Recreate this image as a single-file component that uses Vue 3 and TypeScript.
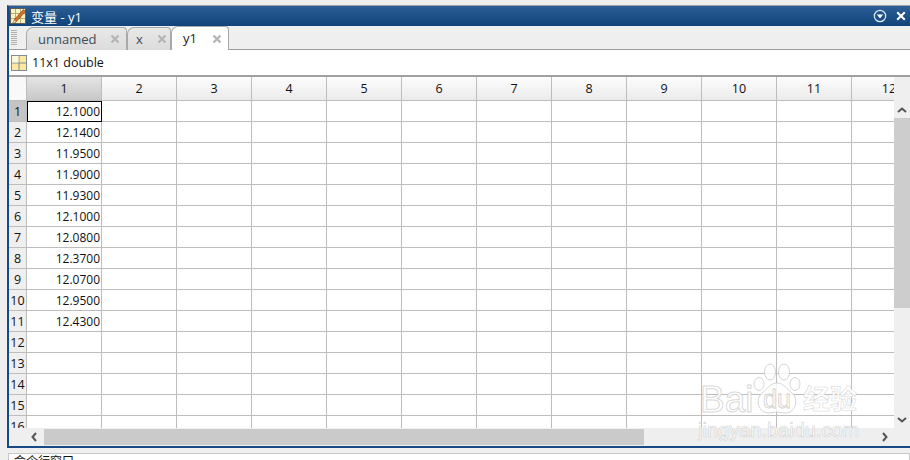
<script setup lang="ts">
const columns = Array.from({ length: 12 }, (_, i) => i + 1)
const values = ['12.1000', '12.1400', '11.9500', '11.9000', '11.9300', '12.1000', '12.0800', '12.3700', '12.0700', '12.9500', '12.4300']
const rows = Array.from({ length: 16 }, (_, i) => ({ n: i + 1, value: values[i] ?? '' }))
const tabs = [
  { name: 'unnamed', width: 101 },
  { name: 'x', width: 44 },
  { name: 'y1', width: 58, active: true },
]
</script>

<template>
  <div class="page">
    <div class="window">
      <div class="titlebar">
        <svg class="app-icon" width="16" height="16" viewBox="0 0 16 16">
          <rect x="0.5" y="0.5" width="15" height="15" fill="#fbf3bd" stroke="#5c5c5c" />
          <path d="M1 5.5h14M1 10.5h14M5.5 1v14M10.5 1v14" stroke="#b8ac78" fill="none" />
          <path d="M4 12 L13.5 1.5 L15.5 3.5 L6 14 L3 15 Z" fill="#d9702a" stroke="#7a3410" stroke-width="0.6" />
          <path d="M3 15l1-3 2 2z" fill="#f5e2c0" />
        </svg>
        <span class="title">变量 - y1</span>
        <span class="spacer"></span>
        <svg width="14" height="14" viewBox="0 0 14 14">
          <circle cx="7" cy="7" r="5.7" fill="none" stroke="#dfe8f2" stroke-width="1.2" />
          <path d="M3.8 5.6h6.4L7 9.4z" fill="#fff" />
        </svg>
        <svg class="close" width="10" height="10" viewBox="0 0 10 10">
          <path d="M1.2 1.2l7.6 7.6M8.8 1.2L1.2 8.8" stroke="#fff" stroke-width="2" />
        </svg>
      </div>

      <div class="tabstrip">
        <div class="grip"></div>
        <div v-for="tab in tabs" :key="tab.name" class="tab" :class="{ active: tab.active }" :style="{ width: tab.width + 'px' }">
          <span class="tab-name">{{ tab.name }}</span>
          <svg width="10" height="10" viewBox="0 0 10 10">
            <path d="M1.5 1.5l7 7M8.5 1.5l-7 7" stroke="#b4b4b4" stroke-width="2.2" />
          </svg>
        </div>
      </div>

      <div class="info">
        <svg width="16" height="16" viewBox="0 0 16 16">
          <rect x="0.5" y="0.5" width="15" height="15" fill="#fbe9a0" stroke="#7f8c99" />
          <path d="M0.5 8h15M8 0.5v15" stroke="#7f8c99" fill="none" />
          <rect x="1" y="1" width="6.5" height="6.5" fill="#fdf8dc" />
        </svg>
        <span>11x1 double</span>
      </div>

      <div class="sheet">
        <div class="sheet-main">
          <div class="grid-wrap">
            <table class="grid">
              <thead>
                <tr>
                  <th class="corner"></th>
                  <th v-for="c in columns" :key="c" class="col" :class="{ selected: c === 1 }">{{ c }}</th>
                </tr>
              </thead>
              <tbody>
                <tr v-for="r in rows" :key="r.n">
                  <th class="rowhead" :class="{ selected: r.n === 1 }">{{ r.n }}</th>
                  <td v-for="c in columns" :key="c" :class="{ current: c === 1 && r.n === 1 }">{{ c === 1 ? r.value : '' }}</td>
                </tr>
              </tbody>
            </table>
          </div>
          <div class="vscroll">
            <svg class="arrow" width="10" height="6" viewBox="0 0 10 6"><path d="M1 5l4-3.5L9 5" fill="none" stroke="#555" stroke-width="2" /></svg>
            <div class="vtrack"><div class="vthumb"></div></div>
            <svg class="arrow" width="10" height="6" viewBox="0 0 10 6"><path d="M1 1l4 3.5L9 1" fill="none" stroke="#555" stroke-width="2" /></svg>
          </div>
        </div>
        <div class="hscroll">
          <svg width="6" height="10" viewBox="0 0 6 10"><path d="M5 1L1.5 5 5 9" fill="none" stroke="#555" stroke-width="2" /></svg>
          <div class="htrack"><div class="hthumb"></div></div>
          <svg width="6" height="10" viewBox="0 0 6 10"><path d="M1 1l3.5 4L1 9" fill="none" stroke="#555" stroke-width="2" /></svg>
        </div>
      </div>
    </div>

    <div class="cmd">命令行窗口</div>

    <div class="watermark">
      <div class="wm-logo">
        <span class="wm-bai">Bai</span>
        <div class="wm-mark">
          <svg viewBox="0 0 50 52">
            <ellipse cx="18" cy="9" rx="5.5" ry="8" />
            <ellipse cx="32" cy="9" rx="5.5" ry="8" />
            <ellipse cx="7" cy="21" rx="5" ry="6.5" />
            <ellipse cx="43" cy="21" rx="5" ry="6.5" />
            <path d="M25 20c6 0 9 5 15 10 7 6 4 20-7 20-3 0-5-1-8-1s-5 1-8 1c-11 0-14-14-7-20 6-5 9-10 15-10z" />
          </svg>
          <span class="wm-du">du</span>
        </div>
        <span class="wm-jy">经验</span>
      </div>
      <div class="wm-url">jingyan.baidu.com</div>
    </div>
  </div>
</template>

<style scoped>
.page {
  position: relative;
  width: 910px;
  height: 460px;
  overflow: hidden;
  background: #efefef;
  font-family: "Open Sans", "Noto Sans CJK SC", sans-serif;
  font-size: 12px;
  color: #111;
  padding: 5px 0 0 7px;
  box-sizing: border-box;
}

.window {
  width: 903px;
  height: 443px;
  box-sizing: border-box;
  border-left: 2px solid #164a85;
  border-bottom: 2px solid #164a85;
  display: flex;
  flex-direction: column;
  background: #efefef;
  border-top: 1px solid #a0a0a0;
}

.titlebar {
  height: 20px;
  background: linear-gradient(#2c5f96, #0f4379);
  color: #fff;
  display: flex;
  align-items: center;
  padding: 0 4px 0 1px;
  gap: 5px;
  font-size: 13px;
}

.title {
  font-size: 13px;
}

.spacer {
  flex: 1;
}

.close {
  margin-left: 4px;
}

.tabstrip {
  height: 24px;
  display: flex;
  align-items: flex-end;
  padding-left: 17px;
  position: relative;
  background: #efefef;
  border-bottom: 1px solid #9b9b9b;
  box-sizing: border-box;
}

.grip {
  position: absolute;
  left: 2px;
  top: 4px;
  width: 6px;
  height: 16px;
  background: repeating-linear-gradient(#b0b0b0 0 1px, transparent 1px 2px);
}

.tab {
  height: 23px;
  box-sizing: border-box;
  display: flex;
  align-items: center;
  justify-content: space-between;
  padding: 0 6px 0 11px;
  background: linear-gradient(#e8e8e8, #dcdcdc);
  border: 1px solid #a8a8a8;
  border-bottom: none;
  border-radius: 7px 4px 0 0;
  font-size: 13px;
  color: #3f4a55;
  margin-bottom: -1px;
  flex: none;
}

.tab:nth-child(3) {
  padding: 0 3px 0 8px;
}

.tab.active {
  background: #fff;
  color: #222;
  height: 24px;
  position: relative;
}

.tab-name {
  line-height: 1;
}

.info {
  height: 27px;
  background: #fff;
  display: flex;
  align-items: center;
  gap: 5px;
  padding-left: 2px;
  font-size: 12.5px;
  box-sizing: border-box;
  border-bottom: 2px solid #a0a0a0;
  flex: none;
}

.sheet {
  flex: 1;
  display: flex;
  flex-direction: column;
  min-height: 0;
}

.sheet-main {
  flex: 1;
  display: flex;
  min-height: 0;
}

.grid-wrap {
  flex: 1;
  overflow: hidden;
  background: #fff;
  min-width: 0;
}

.grid {
  border-collapse: separate;
  border-spacing: 0;
  table-layout: fixed;
  width: 918px;
}

.grid th,
.grid td {
  box-sizing: border-box;
  padding: 0;
  border-right: 1px solid #bdbdbd;
  border-bottom: 1px solid #bdbdbd;
  font-weight: 400;
}

.corner {
  width: 18px;
  height: 24px;
  background: #f9f9f9;
}

.col {
  width: 75px;
  height: 24px;
  background: linear-gradient(#fdfdfd, #ebebeb);
  text-align: center;
  font-size: 12.5px;
}

.col.selected {
  background: linear-gradient(#e4e4e4, #c8c8c8);
}

.rowhead {
  height: 21px;
  background: #efefef;
  text-align: center;
  font-size: 12.5px;
}

.rowhead.selected {
  background: #c4c4c4;
}

.grid td {
  height: 21px;
  text-align: right;
  padding-right: 1px;
  font-size: 12px;
  background: #fff;
}

.grid td.current {
  box-shadow: inset 1px 1px 0 #000;
  border-color: #000;
}

.vscroll {
  width: 16px;
  flex: none;
  display: flex;
  flex-direction: column;
  align-items: center;
  background: #efefef;
  padding: 30px 0 5px;
  gap: 5px;
  box-sizing: border-box;
}

.vtrack {
  flex: 1;
  width: 100%;
}

.vthumb {
  height: 190px;
  background: #cdcdcd;
}

.hscroll {
  height: 18px;
  flex: none;
  display: flex;
  align-items: center;
  padding: 0 22px 0 22px;
  gap: 7px;
  background: #efefef;
}

.htrack {
  flex: 1;
  height: 16px;
}

.hthumb {
  width: 600px;
  height: 100%;
  background: #cacaca;
}

.cmd {
  margin: 5px 0 0 1px;
  height: 20px;
  padding-left: 5px;
  background: #fff;
  border: 1px solid #c8c8c8;
  font-size: 12px;
  line-height: 16px;
}

.watermark {
  position: absolute;
  left: 698px;
  top: 363px;
  width: 165px;
  color: rgba(255, 255, 255, 0.9);
  pointer-events: none;
}

.wm-logo {
  display: flex;
  align-items: flex-end;
  height: 52px;
}

.wm-bai {
  width: 52px;
  margin: 0 0 -5px 2px;
  flex: none;
  font-family: "Liberation Sans", sans-serif;
  font-size: 37px;
  line-height: 40px;
  -webkit-text-stroke: 1px rgba(195, 195, 195, 0.65);
}

.wm-mark {
  position: relative;
  width: 50px;
  height: 52px;
  flex: none;
}

.wm-mark svg {
  display: block;
  width: 50px;
  height: 52px;
  fill: rgba(255, 255, 255, 0.8);
  stroke: rgba(195, 195, 195, 0.7);
}

.wm-du {
  position: absolute;
  left: 11px;
  bottom: 1px;
  font-family: "Liberation Sans", sans-serif;
  font-size: 25px;
  line-height: 30px;
  -webkit-text-stroke: 0.8px rgba(185, 185, 185, 0.7);
}

.wm-jy {
  font-size: 27px;
  font-weight: 700;
  line-height: 32px;
  margin-left: 1px;
  white-space: nowrap;
  -webkit-text-stroke: 0.6px rgba(190, 190, 190, 0.6);
}

.wm-url {
  font-family: "Liberation Sans", sans-serif;
  font-size: 20px;
  margin-top: 4px;
  line-height: 22px;
  white-space: nowrap;
  -webkit-text-stroke: 0.7px rgba(190, 190, 190, 0.6);
}
</style>
